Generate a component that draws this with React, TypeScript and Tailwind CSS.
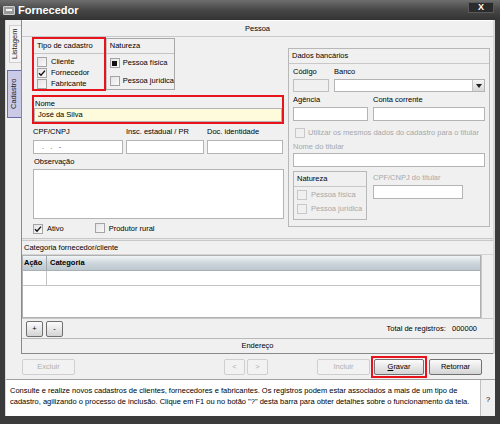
import React from "react";

function Check({ checked = false, disabled = false }: { checked?: boolean; disabled?: boolean }) {
  return (
    <span
      className={
        "inline-flex w-[10px] h-[10px] shrink-0 items-center justify-center border " +
        (disabled ? "border-[#c8c8c8] bg-[#f0f0f0]" : "border-[#a4a4a4] bg-gradient-to-br from-[#e4e4e4] to-[#fafafa]")
      }
    >
      {checked && (
        <svg width="8" height="8" viewBox="0 0 8 8">
          <path d="M1 4.2 L3 6.2 L7 1.6" fill="none" stroke="#111" strokeWidth="1.4" />
        </svg>
      )}
    </span>
  );
}

function Radio({ on = false }: { on?: boolean }) {
  return (
    <span className="inline-flex w-[10px] h-[10px] shrink-0 items-center justify-center border border-[#a4a4a4] bg-gradient-to-br from-[#e4e4e4] to-[#fafafa]">
      {on && <span className="w-[5px] h-[5px] bg-[#111]" />}
    </span>
  );
}

function Btn({ label, disabled = false, w = "w-[53px]" }: { label: React.ReactNode; disabled?: boolean; w?: string }) {
  return (
    <div
      className={
        w +
        " h-[16px] flex items-center justify-center rounded-[2px] border " +
        (disabled
          ? "border-[#cfcfcf] bg-[#f2f2f2] text-[#b0b0b0]"
          : "border-[#707070] bg-gradient-to-b from-[#fbfbfb] via-[#e8e8e8] to-[#d4d4d4] text-black")
      }
    >
      {label}
    </div>
  );
}

export default function App() {
  return (
    <div className="w-[500px] h-[424px] bg-[#3b3b3b] flex flex-col overflow-hidden whitespace-nowrap font-['Liberation_Sans',Arial,sans-serif] text-[7.5px] leading-none text-black">
      {/* title bar */}
      <div className="h-[20px] shrink-0 flex items-center pl-[3px] pr-[6px] bg-gradient-to-b from-[#6e6e6e] via-[#474747] to-[#333333]">
        <span className="w-[12px] h-[9px] rounded-[1px] border border-[#cfcfcf] bg-[#9a9a9a] flex items-center justify-center">
          <span className="w-[6px] h-[2px] bg-[#f4f4f4]" />
        </span>
        <span className="ml-[3px] text-[11px] font-bold text-white">Fornecedor</span>
        <span className="ml-auto mb-[6px] w-[26px] h-[11px] bg-[#2b2b2b] border border-[#5a5a5a] flex items-center justify-center text-[9px] font-bold text-white">
          X
        </span>
      </div>

      <div className="mx-[5px] flex flex-col bg-[#f0f0f0] border-l border-l-[#d8d8d8]">
        {/* tabs + panel */}
        <div className="h-[334px] flex">
          <div className="w-[15px] flex flex-col items-end pt-[5px]">
            <div className="w-[12px] h-[38px] border border-r-0 border-[#d0d0d0] bg-[#f4f4f4] flex items-center justify-center">
              <span className="-rotate-90 text-[#222]">Listagem</span>
            </div>
            <div className="mt-[7px] w-[14px] h-[48px] border border-r-0 border-[#6a6aa8] bg-[#cacae6] flex items-center justify-center">
              <span className="-rotate-90 text-[#222]">Cadastro</span>
            </div>
          </div>

          <div className="flex-1 flex flex-col border-l border-[#8a8a8a] border-r-2 border-r-[#d8d8d8]">
            <div className="h-[17px] flex items-center justify-center border-b border-[#c8c8c8] border-t border-t-white">
              Pessoa
            </div>

            {/* main content */}
            <div className="h-[201px] flex pl-[10px]">
              {/* left column */}
              <div className="w-[252px] flex flex-col">
                <div className="mt-[1px] w-[143px] h-[52px] flex border border-[#a8a8a8] relative">
                  <div className="w-[73px] flex flex-col relative">
                    <div className="h-[15px] flex items-center pl-[4px] border-b border-[#c4c4c4]">Tipo de cadastro</div>
                    <div className="flex flex-col pl-[4px] pt-[2px]">
                      {[
                        ["Cliente", false],
                        ["Fornecedor", true],
                        ["Fabricante", false],
                      ].map(([l, c]) => (
                        <div key={l as string} className="h-[11px] flex items-center gap-[4px]">
                          <Check checked={c as boolean} />
                          <span>{l as string}</span>
                        </div>
                      ))}
                    </div>
                    <div className="absolute -left-px -top-[2px] -bottom-[2px] right-0 border-2 border-[#e8141c]" />
                  </div>
                  <div className="flex-1 flex flex-col border-l border-[#c4c4c4]">
                    <div className="h-[15px] flex items-center pl-[3px] border-b border-[#c4c4c4]">Natureza</div>
                    <div className="flex flex-col pl-[3px] pt-[4px] gap-[8px]">
                      <div className="h-[10px] flex items-center gap-[3px]">
                        <Radio on />
                        <span>Pessoa física</span>
                      </div>
                      <div className="h-[10px] flex items-center gap-[3px]">
                        <Radio />
                        <span>Pessoa jurídica</span>
                      </div>
                    </div>
                  </div>
                </div>

                <div className="mt-[5px] h-[29px] border-2 border-[#e8141c] flex flex-col">
                  <div className="h-[10px] flex items-end pl-[1px]">Nome</div>
                  <div className="mt-[1px] h-[14px] border border-[#b4b4b4] bg-[#fdfbdc] flex items-center px-[3px]">
                    José da Silva
                  </div>
                </div>

                <div className="mt-[4px] flex gap-[3px] pl-[1px]">
                  <div className="w-[90px] flex flex-col">
                    <span className="h-[9px]">CPF/CNPJ</span>
                    <div className="mt-[3px] h-[14px] border border-[#b4b4b4] bg-white flex items-center pl-[8px] text-[#555]">
                      .&nbsp;&nbsp;&nbsp;.&nbsp;&nbsp;&nbsp;-
                    </div>
                  </div>
                  <div className="w-[78px] flex flex-col">
                    <span className="h-[9px]">Insc. estadual / PR</span>
                    <div className="mt-[3px] h-[14px] border border-[#b4b4b4] bg-white" />
                  </div>
                  <div className="w-[76px] flex flex-col">
                    <span className="h-[9px]">Doc. identidade</span>
                    <div className="mt-[3px] h-[14px] border border-[#b4b4b4] bg-white" />
                  </div>
                </div>

                <div className="mt-[4px] pl-[2px] h-[9px]">Observação</div>
                <div className="ml-[1px] mt-[2px] h-[50px] border border-[#b4b4b4] bg-white" />

                <div className="mt-[4px] pl-[1px] h-[11px] flex items-center">
                  <Check checked />
                  <span className="ml-[4px]">Ativo</span>
                  <span className="ml-[31px]">
                    <Check />
                  </span>
                  <span className="ml-[4px]">Produtor rural</span>
                </div>
              </div>

              {/* right column */}
              <div className="ml-[4px] mt-[11px] w-[202px] h-[179px] border border-[#b8b8b8] flex flex-col">
                <div className="h-[15px] flex items-center pl-[3px] border-b border-[#c8c8c8]">Dados bancários</div>
                <div className="px-[4px] flex flex-col">
                  <div className="mt-[4px] flex gap-[5px]">
                    <div className="w-[36px] flex flex-col">
                      <span className="h-[9px]">Código</span>
                      <div className="mt-[2px] h-[13px] border border-[#c0c0c0] bg-[#f0f0f0]" />
                    </div>
                    <div className="flex-1 flex flex-col">
                      <span className="h-[9px]">Banco</span>
                      <div className="mt-[2px] h-[13px] border border-[#b4b4b4] bg-white flex justify-end">
                        <div className="w-[12px] h-full bg-gradient-to-b from-[#f6f6f6] to-[#d8d8d8] border-l border-[#c4c4c4] flex items-center justify-center">
                          <svg width="6" height="4" viewBox="0 0 6 4">
                            <path d="M0 0 H6 L3 4 Z" fill="#222" />
                          </svg>
                        </div>
                      </div>
                    </div>
                  </div>

                  <div className="mt-[4px] flex gap-[5px]">
                    <div className="w-[75px] flex flex-col">
                      <span className="h-[9px]">Agência</span>
                      <div className="mt-[2px] h-[14px] border border-[#b4b4b4] bg-white" />
                    </div>
                    <div className="flex-1 flex flex-col">
                      <span className="h-[9px]">Conta corrente</span>
                      <div className="mt-[2px] h-[14px] border border-[#b4b4b4] bg-white" />
                    </div>
                  </div>

                  <div className="mt-[6px] h-[11px] flex items-center pl-[2px] gap-[3px] text-[#a8a8a8]">
                    <Check disabled />
                    <span>Utilizar os mesmos dados do cadastro para o titular</span>
                  </div>

                  <div className="mt-[5px] h-[9px] text-[#a8a8a8]">Nome do titular</div>
                  <div className="mt-[1px] h-[14px] border border-[#b4b4b4] bg-white" />

                  <div className="mt-[4px] flex">
                    <div className="w-[74px] h-[49px] border border-[#b8b8b8] flex flex-col">
                      <div className="h-[15px] flex items-center pl-[3px] border-b border-[#c8c8c8]">Natureza</div>
                      <div className="flex flex-col pl-[3px] pt-[3px] gap-[4px] text-[#a8a8a8]">
                        <div className="h-[10px] flex items-center gap-[4px]">
                          <Check disabled />
                          <span>Pessoa física</span>
                        </div>
                        <div className="h-[10px] flex items-center gap-[4px]">
                          <Check disabled />
                          <span>Pessoa jurídica</span>
                        </div>
                      </div>
                    </div>
                    <div className="ml-[6px] mt-[3px] flex flex-col">
                      <span className="h-[9px] text-[#a8a8a8]">CPF/CNPJ do titular</span>
                      <div className="mt-[2px] w-[90px] h-[14px] border border-[#b4b4b4] bg-white" />
                    </div>
                  </div>
                </div>
              </div>
            </div>

            {/* separator */}
            <div className="h-[3px] border-t border-[#c8c8c8] border-b border-b-[#c8c8c8] bg-[#e8e8e8]" />

            <div className="h-[14px] flex items-center pl-[2px] border-b border-[#d4d4d4]">Categoria fornecedor/cliente</div>

            {/* table */}
            <div className="h-[63px] flex">
              <div className="w-[459px] border border-[#b0b0b0] bg-white flex flex-col">
                <div className="h-[15px] flex font-bold bg-gradient-to-b from-[#f2f5f7] via-[#cdd6dc] to-[#bcc7ce] border-b border-[#a8b0b6]">
                  <div className="w-[24px] flex items-center pl-[1px] border-r border-[#a0a8ae]">Ação</div>
                  <div className="flex items-center pl-[3px]">Categoria</div>
                </div>
                <div className="h-[15px] flex border-b border-[#c4c4c4]">
                  <div className="w-[24px] border-r border-[#c4c4c4]" />
                </div>
              </div>
              <div className="flex-1 border-l border-[#c8c8c8] bg-[#f0f0f0]" />
            </div>

            <div className="h-[20px] flex items-center px-[4px] border-t border-[#c8c8c8]">
              <Btn label="+" w="w-[17px]" />
              <span className="ml-[3px]">
                <Btn label="-" w="w-[17px]" />
              </span>
              <span className="ml-auto mr-[12px]">
                Total de registros:&nbsp;&nbsp;&nbsp;000000
              </span>
            </div>

            <div className="h-[15px] flex items-center justify-center border-t border-[#b8b8b8]">Endereço</div>
            <div className="h-px bg-[#8a8a8a]" />
          </div>
        </div>

        {/* bottom buttons */}
        <div className="h-[25px] flex items-center">
          <span className="ml-[16px]">
            <Btn label="Excluir" disabled />
          </span>
          <span className="ml-[149px]">
            <Btn label="<" disabled w="w-[21px]" />
          </span>
          <span className="ml-[2px]">
            <Btn label=">" disabled w="w-[21px]" />
          </span>
          <span className="ml-[49px]">
            <Btn label="Incluir" disabled />
          </span>
          <span className="ml-[1px] p-[1px] border-2 border-[#e8141c]">
            <Btn
              label={
                <span>
                  <span className="underline">G</span>ravar
                </span>
              }
              w="w-[50px]"
            />
          </span>
          <span className="ml-[2px]">
            <Btn label="Retornar" />
          </span>
        </div>

        {/* help */}
        <div className="h-[37px] flex border-t border-[#a0a0a0]">
          <div className="w-[475px] bg-white border-r border-[#c0c0c0] pl-[4px] pt-[5px] leading-[11px] whitespace-normal">
            Consulte e realize novos cadastros de clientes, fornecedores e fabricantes. Os registros podem estar associados a mais de um tipo de cadastro, agilizando o processo de inclusão. Clique em F1 ou no botão "?" desta barra para obter detalhes sobre o funcionamento da tela.
          </div>
          <div className="flex-1 flex items-center justify-center pt-[4px]">?</div>
        </div>
      </div>
    </div>
  );
}
